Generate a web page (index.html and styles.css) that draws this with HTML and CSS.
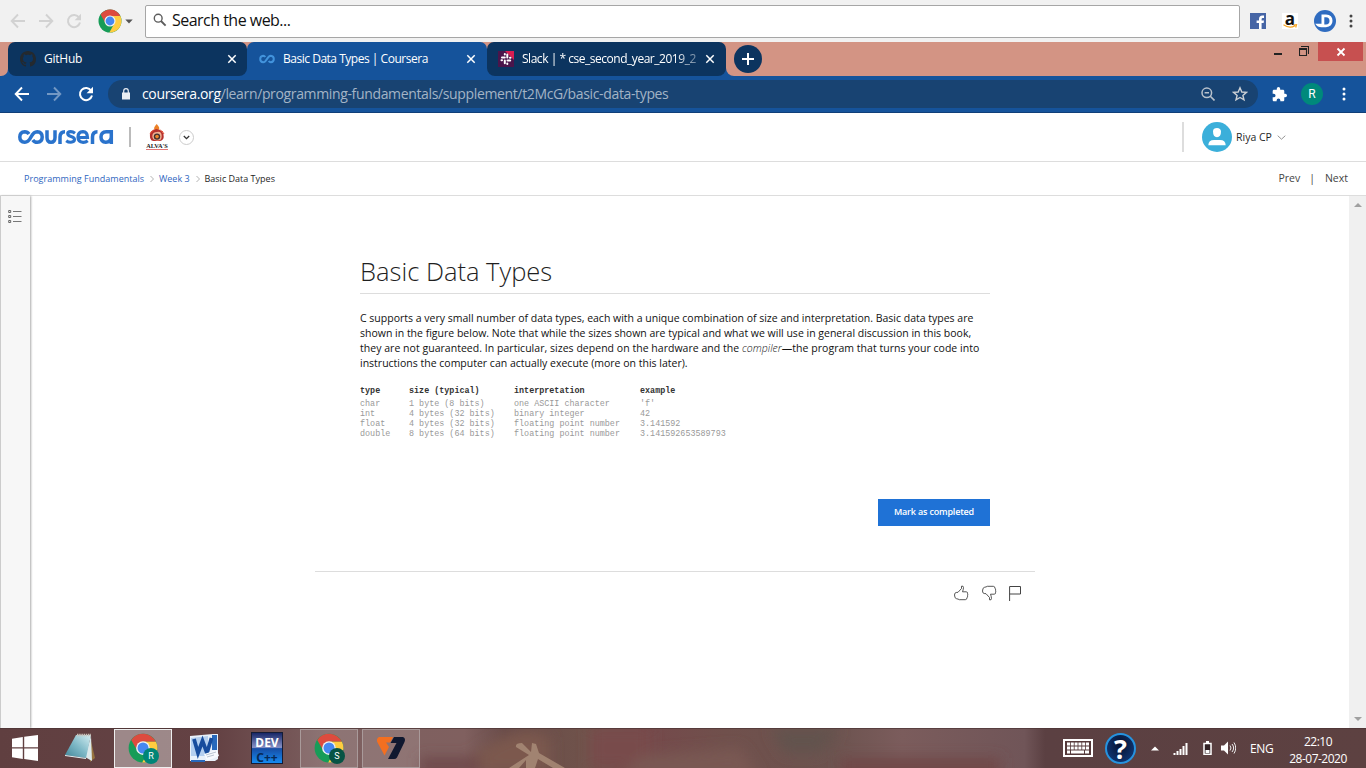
FILE: index.html
```html
<!DOCTYPE html>
<html lang="en">
<head>
<meta charset="utf-8">
<title>Basic Data Types | Coursera</title>
<link rel="stylesheet" href="styles.css">
</head>
<body>
<svg class="defs" width="0" height="0">
  <symbol id="back" viewBox="0 0 16 16"><path d="M15 8H2M8 1.5L1.7 8 8 14.5" fill="none" stroke="currentColor" stroke-width="1.9"/></symbol>
  <symbol id="forward" viewBox="0 0 16 16"><path d="M1 8h13M8 1.5L14.3 8 8 14.5" fill="none" stroke="currentColor" stroke-width="1.9"/></symbol>
  <symbol id="reload" viewBox="0 0 16 16"><path d="M13.2 4.7A6.1 6.1 0 1 0 14 9.6" fill="none" stroke="currentColor" stroke-width="2"/><path d="M15 .8v6.4H8.6z" fill="currentColor"/></symbol>
  <symbol id="chrome" viewBox="0 0 48 48"><circle cx="24" cy="24" r="23" fill="#179c58"/><path d="M24 14h20.7A23 23 0 0 0 5.2 11L15.3 29A10 10 0 0 1 24 14Z" fill="#dd4b3e"/><path d="M44.7 14A23 23 0 0 1 22.7 47L32.7 29A10 10 0 0 0 24 14Z" fill="#ffcd40"/><circle cx="24" cy="24" r="11" fill="#f4f4f4"/><circle cx="24" cy="24" r="8.8" fill="#4688f1"/></symbol>
  <symbol id="close" viewBox="0 0 10 10"><path d="M1.3 1.300l7.400 7.400M8.700 1.300L1.300 8.700" fill="none" stroke="currentColor" stroke-width="1.500"/></symbol>
  <symbol id="dots" viewBox="0 0 4 14"><circle cx="2" cy="2" r="1.5"/><circle cx="2" cy="7" r="1.5"/><circle cx="2" cy="12" r="1.5"/></symbol>
  <symbol id="chev" viewBox="0 0 8 8"><path d="M2.5 1l3 3-3 3" fill="none" stroke="#aaa" stroke-width=".9"/></symbol>
  <symbol id="thumb" viewBox="0 0 16 16"><path d="M1.500 10q0-2.300 1.700-2.500L5 7.300 8.500 3.500V1.200q2-.6 2 1.300Q10.300 5 9.500 6.800h3.700q1.800.2 1.400 2 .5 1.200-.1 2 .4 1.200-.5 2-.1 1.800-1.700 1.900H6.300q-1.200-.8-2.600-.9-2.200-.3-2.200-3.800z" fill="none" stroke="#444" stroke-width=".9"/></symbol>
</svg>

<header class="search-bar">
  <svg class="nav n1"><use href="#back"/></svg>
  <svg class="nav n2"><use href="#forward"/></svg>
  <svg class="nav n3"><use href="#reload"/></svg>
  <svg class="engine"><use href="#chrome"/></svg>
  <svg class="caret" viewBox="0 0 8 5"><path d="M.3.5h7.400L4 4.500z" fill="#555"/></svg>
  <div class="search-box">
    <svg class="lens" viewBox="0 0 14 14"><circle cx="5.2" cy="5.200" r="3.900" fill="none" stroke="#5c5c5c" stroke-width="1.400"/><path d="M8 8l4.600 4.600" stroke="#5c5c5c" stroke-width="1.900"/></svg>
    <span>Search the web...</span>
  </div>
  <svg class="fb" viewBox="0 0 16 16"><path d="M0 0h16v16H0z" fill="#4665a5"/><path d="M9 16v-6H6.600V7.500H9V6q0-3.500 3.500-3.500H14V5h-1.300q-1.100 0-1.100 1.200v1.300H14l-.4 2.500h-2v6z" fill="#fff"/></svg>
  <div class="amazon"><b>a</b><svg viewBox="0 0 16 5"><path d="M1.500.8Q7.500 5 13 1.700M11.500 1l3-.3-.8 2.800" fill="none" stroke="#f6a21c" stroke-width="1.200"/></svg></div>
  <svg class="dlogo" viewBox="0 0 22 22"><circle cx="11" cy="11" r="11" fill="#2f6cc0"/><path d="M7.500 4.500H12q6.500.4 6.500 6.300T12 17.300H7.500q-4 0-6.300-3.600h6.300zM10.300 7.300v7.200H12q3.500-.3 3.500-3.600T12 7.300z" fill="#fff" fill-rule="evenodd"/></svg>
  <svg class="dots grey"><use href="#dots"/></svg>
</header>

<nav class="tabs">
  <span class="gap-left"></span>
  <div class="tab">
    <svg class="github" viewBox="0 0 16 16"><path fill="#24292e" d="M8 0C3.580 0 0 3.580 0 8c0 3.540 2.290 6.530 5.470 7.590.4.070.550-.170.550-.380 0-.190-.010-.820-.010-1.490-2.010.370-2.530-.490-2.690-.940-.090-.230-.480-.940-.820-1.130-.280-.150-.680-.520-.010-.530.630-.010 1.080.580 1.230.820.720 1.210 1.870.870 2.330.660.070-.520.280-.870.510-1.070-1.780-.200-3.640-.890-3.640-3.950 0-.870.310-1.590.820-2.150-.080-.200-.360-1.020.080-2.120 0 0 .670-.210 2.200.820.640-.180 1.320-.270 2-.270s1.360.090 2 .270c1.530-1.040 2.200-.820 2.200-.820.440 1.100.160 1.920.080 2.120.510.560.820 1.270.820 2.150 0 3.070-1.870 3.750-3.650 3.950.290.250.540.730.540 1.480 0 1.070-.010 1.930-.010 2.200 0 .210.150.460.550.380A8.010 8.010 0 0 0 16 8c0-4.420-3.580-8-8-8z"/></svg>
    <span class="tab-title t1">GitHub</span>
    <svg class="x"><use href="#close"/></svg>
  </div>
  <div class="tab active">
    <svg class="infinity" viewBox="0 0 16 10"><path d="M6.300 3Q5.500 1.700 4.200 1.700 1.200 2 1.200 5t3 3.300Q6.200 8.200 8 5t3.800-3.300Q14.800 2 14.800 5t-3 3.300Q10.500 8.300 9.700 7" fill="none" stroke="#4293dc" stroke-width="2"/></svg>
    <span class="tab-title t2">Basic Data Types | Coursera</span>
    <svg class="x"><use href="#close"/></svg>
  </div>
  <div class="tab third">
    <svg class="slack" viewBox="0 0 16 16"><path d="M0 0h16v16H0z" fill="#4a154b"/><path d="M7 0h9v9z" fill="#d81e52"/><path d="M6.800 3v.5M4 6.500h2.800M9.300 3.500v3M12 6.700h.5M3.500 9.300H4M6.800 9.500v2.800M9.300 12.500v.5M9.500 9.500h2.700" stroke="#fff" stroke-width="2" stroke-linecap="round"/></svg>
    <span class="tab-title t3">Slack | * cse_second_year_2019_2</span>
    <svg class="x"><use href="#close"/></svg>
  </div>
  <div class="strip-end">
    <span class="plus"><svg viewBox="0 0 12 12"><path d="M6 0v12M0 6h12" stroke="#fff" stroke-width="2"/></svg></span>
    <div class="window-buttons">
      <i class="minimize"></i>
      <svg class="restore" viewBox="0 0 10 10"><path d="M.5 2.500h7v7h-7zM.5 3.500h7M2 .5h7.500v7.500" fill="none" stroke="#222" stroke-width="1.100"/></svg>
      <span class="shut"><svg viewBox="0 0 10 10"><path d="M1.500 1.500l7 7M8.500 1.500l-7 7" stroke="#fff" stroke-width="1.800"/></svg></span>
    </div>
  </div>
</nav>

<div class="address-row">
  <svg class="nav a1"><use href="#back"/></svg>
  <svg class="nav a2"><use href="#forward"/></svg>
  <svg class="nav a3"><use href="#reload"/></svg>
  <div class="omnibox">
    <svg class="lock" viewBox="0 0 8 12"><path d="M0 4.500h8v7H0z" fill="#e8edf3"/><path d="M1.700 5V3a2.300 2.300 0 0 1 4.600 0v2" fill="none" stroke="#e8edf3" stroke-width="1.200"/></svg>
    <span class="url"><b>coursera.org</b>/learn/programming-fundamentals/supplement/t2McG/basic-data-types</span>
    <svg class="zoomout" viewBox="0 0 14 14"><circle cx="5.800" cy="5.800" r="4.800" fill="none" stroke="#b9c2cc" stroke-width="1.500"/><path d="M9.300 9.300l4.200 4.200M3.600 5.800H8" stroke="#b9c2cc" stroke-width="1.600"/></svg>
    <svg class="star" viewBox="0 0 16 16"><path d="M8 1.800l1.800 4.200 4.600.4L10.900 9.400l1.100 4.500-4-2.400-4 2.400 1.100-4.500L1.600 6.400 6.200 6z" fill="none" stroke="#cbd0d5" stroke-width="1.400"/></svg>
  </div>
  <svg class="puzzle" viewBox="1 1 22 22"><path fill="#fff" d="M20.500 11H19V7c0-1.100-.9-2-2-2h-4V3.500a2.500 2.500 0 0 0-5 0V5H4c-1.100 0-2 .9-2 2v3.800h1.500a2.700 2.700 0 0 1 0 5.400H2V20c0 1.100.9 2 2 2h3.800v-1.500a2.700 2.700 0 0 1 5.400 0V22H17c1.100 0 2-.9 2-2v-4h1.500a2.500 2.500 0 0 0 0-5z"/></svg>
  <span class="profile">R</span>
  <svg class="dots white"><use href="#dots"/></svg>
</div>

<div class="site-header">
  <svg class="coursera" viewBox="0 0 96 18"><g fill="none" stroke="#2a73cc" stroke-width="3.500"><path d="M11 6Q9.500 3.700 6.800 3.700 1.800 4 1.800 9t5 5.300Q10.300 14.300 13 9T19.200 3.700Q24.200 4 24.200 9t-5 5.300Q16.300 14.300 14.800 12"/><path d="M29 2.200v7.300q0 4.800 4 4.800t4-4.800V2.200"/><path d="M42 16V9q0-5.300 5-5.300"/><path d="M57 5.200Q55 3.600 52.700 3.600q-3 0-3 2t3.300 2.800q3.500.8 3.500 3.200t-3.700 2.700q-2.600 0-4.600-1.600" stroke-width="3.100"/><path d="M60.500 9.500h9Q69.300 3.800 65 3.700q-5 .3-5 5.300t5.200 5.300q2.600 0 4.500-1.600" stroke-width="3.200"/><path d="M74.500 16V9q0-5.300 5-5.300"/><path d="M93.300 16V3.700h-5q-5.300.3-5.300 5.300t4.800 5.300q5-.3 5.500-5"/></g></svg>
  <i class="divider"></i>
  <div class="college">
    <svg viewBox="0 0 18 18"><path d="M8.700 0q4 4 1.800 6H6.800Q4.700 4 8.700 0" fill="#ed8126"/><path d="M8.500 5q-8 1-6.500 8.500 1 3.500 3.500 3.500h6.500q3.500-1 3.700-4Q16 6 8.500 5" fill="#b5302d"/><path d="M9 8Q4.500 8 4.300 12T9 16.500t4.700-4.500T9 8" fill="#efb092"/><circle cx="9" cy="12.600" r="3.200" fill="#413033"/><circle cx="9" cy="12.600" r="1.800" fill="#ee862c"/><path d="M4 7l-2 3M6 5.500L3.500 8M12 5.500L14.500 8M14 7l2 3" stroke="#e54c31"/></svg>
    <span>ALVA'S</span>
  </div>
  <span class="round"><svg viewBox="0 0 7 5"><path d="M.8 1l2.700 2.700L6.200 1" fill="none" stroke="#333" stroke-width="1.300"/></svg></span>
  <i class="divider light"></i>
  <svg class="avatar" viewBox="0 0 30 30"><circle cx="15" cy="15" r="15" fill="#3bafda"/><path d="M11 9.200Q11.200 6 15 6t4 3.500Q19 15 15 15.300 11 15 11 9.200M6.300 23.300Q6.500 18 12 18h6q5.500 0 5.700 5.300z" fill="#fff"/></svg>
  <span class="user">Riya CP</span>
  <svg class="user-caret" viewBox="0 0 9 5"><path d="M.7.7l3.800 3.500L8.300.7" fill="none" stroke="#888" stroke-width=".9"/></svg>
</div>

<div class="crumbs">
  <a class="c1">Programming Fundamentals</a><svg><use href="#chev"/></svg><a class="c2">Week 3</a><svg><use href="#chev"/></svg><span class="c3">Basic Data Types</span>
  <span class="prev">Prev</span><span class="bar">|</span><span class="next">Next</span>
</div>

<div class="content">
  <aside><svg viewBox="0 0 14 13"><path d="M5 1.500h8.500M5 6.500h8.500M5 11.500h8.500" stroke="#777"/><path d="M.7.500h2v2h-2zM.7 5.500h2v2h-2zM.7 10.500h2v2h-2z" fill="none" stroke="#666"/></svg></aside>
  <main>
    <article>
      <h1><span>Basic Data Types</span></h1>
      <p><span>C supports a very small number of data types, each with a unique combination of size and interpretation. Basic data types are</span><br><span>shown in the figure below. Note that while the sizes shown are typical and what we will use in general discussion in this book,</span><br><span class="l3">they are not guaranteed. In particular, sizes depend on the hardware and the <em>compiler</em>—the program that turns your code into</span><br><span>instructions the computer can actually execute (more on this later).</span></p>
      <div class="types">
        <b>type</b><b>size (typical)</b><b>interpretation</b><b>example</b>
        <span>char</span><span>1 byte (8 bits)</span><span>one ASCII character</span><span>'f'</span>
        <span>int</span><span>4 bytes (32 bits)</span><span>binary integer</span><span>42</span>
        <span>float</span><span>4 bytes (32 bits)</span><span>floating point number</span><span>3.141592</span>
        <span>double</span><span>8 bytes (64 bits)</span><span>floating point number</span><span>3.141592653589793</span>
      </div>
      <button>Mark as completed</button>
    </article>
    <footer>
      <svg viewBox="0 0 16 16"><use href="#thumb"/></svg>
      <svg class="down" viewBox="0 0 16 16"><use href="#thumb"/></svg>
      <svg class="flag" viewBox="0 0 12 16"><path d="M.6 16V1.500h10.900v7.500H.6" fill="none" stroke="#444"/></svg>
    </footer>
  </main>
  <div class="scrollbar"><svg viewBox="0 0 8 4"><path d="M0 4l4-4 4 4z" fill="#a0a0a0"/></svg><svg viewBox="0 0 8 4"><path d="M0 0l4 4 4-4z" fill="#a0a0a0"/></svg></div>
</div>

<div class="taskbar">
  <svg class="wallpaper" viewBox="0 0 1366 40" preserveAspectRatio="none">
    <defs><linearGradient id="wall"><stop offset="0" stop-color="#603f40"/><stop offset=".16" stop-color="#644244"/><stop offset=".24" stop-color="#7d6060"/><stop offset=".34" stop-color="#80605f"/><stop offset=".37" stop-color="#684b49"/><stop offset=".43" stop-color="#70534b"/><stop offset=".47" stop-color="#75494b"/><stop offset=".53" stop-color="#70504c"/><stop offset=".61" stop-color="#6c534f"/><stop offset=".66" stop-color="#7b5c5c"/><stop offset=".75" stop-color="#705558"/><stop offset=".765" stop-color="#5b4042"/><stop offset="1" stop-color="#5d4141"/></linearGradient><filter id="soft"><feGaussianBlur stdDeviation="7"/></filter><filter id="slight"><feGaussianBlur stdDeviation=".7"/></filter></defs>
    <path d="M0 0h1366v40H0z" fill="url(#wall)"/>
    <g filter="url(#soft)"><path d="M470 30q50-40 80-20v35h-90z" fill="#7b584e"/><path d="M590 0h60v40h-60z" fill="#784b4b"/><path d="M770 0h70l-20 25h-35z" fill="#62534d"/><path d="M640 28l100-8 20 30H620z" fill="#795852"/><path d="M840 30h160v20H840z" fill="#704746"/><path d="M420 30h60v15h-60z" fill="#6d4648"/></g>
    <path d="M509 40l20-13-13-8q-1-4 6-4l9 9 1-9 4 1 3 9 26 15h-12l-15-9-3 9h-9v-8l-7 8z" fill="#a68875" opacity=".9" filter="url(#slight)"/>
    <path d="M0 .5h1366" stroke="#4c3435" opacity=".7"/>
  </svg>
  <div class="apps">
    <svg class="win" viewBox="0 0 26 26"><path d="M0 3.700L10.800 2v10.300H0zM12.200 1.800L26 0v12.300H12.200zM0 13.500h10.800v10.400L0 22.300zM12.200 13.500H26V26l-13.800-1.900z" fill="#fff"/></svg>
    <svg class="note" viewBox="0 0 32 30"><defs><linearGradient id="pad" x1="1" x2="0" y2="1"><stop stop-color="#d5eef2"/><stop offset=".5" stop-color="#7fb9c7"/><stop offset="1" stop-color="#3f8598"/></linearGradient></defs><path d="M25 4l5 21-5 4z" fill="#96733f"/><path d="M26 3l1 25-7-4z" fill="#dbe8ea"/><path d="M11 2h15l-5 23L0 22z" fill="url(#pad)"/><path d="M0 22l21 3v1L0 23z" fill="#e5f2f5"/><path d="M12 2h14" stroke="#c7c2bb" stroke-width="2.500" stroke-dasharray="1.500 .7"/></svg>
    <div class="app running current"><svg class="chrome"><use href="#chrome"/></svg><span class="badge">R</span></div>
    <svg class="word" viewBox="0 0 29 29"><path d="M0 2L23 0h5v25l-3 2H0z" fill="#e9f1fa"/><path d="M1 4l17-2v20H1z" fill="#b4cfef"/><path d="M22 1h5v15h-5z" fill="#2869bc"/><path d="M4 5l4 14 4.500-12L17 19l4.500-15" fill="none" stroke="#174c9d" stroke-width="3.800"/><path d="M14 20l13-4 2 6-12 5z" fill="#f8fbff"/><path d="M16 21l10-3M17 23l7-2" stroke="#b9c4d1"/><path d="M1 27h14" stroke="#2869bc" stroke-width="2"/></svg>
    <div class="dev"><b>DEV</b><b class="cpp">C++</b></div>
    <div class="app running"><svg class="chrome"><use href="#chrome"/></svg><span class="badge dark">S</span></div>
    <div class="app running"><svg class="v7" viewBox="0 0 28 22"><path d="M2 0h14l-3 5.500H9l3 4.500-4.500 8.500L0 4.500Q-.5 1 2 0" fill="#f36f21"/><path d="M17 0h9q3 1 1.500 5L20 20.500q-1 1.500-3 1.500h-6l8.500-16h-6z" fill="#10182f"/></svg></div>
  </div>
  <div class="tray">
    <svg class="keyboard" viewBox="0 0 30 18"><path d="M1 1h28v16H1z" fill="#55393a" stroke="#fff" stroke-width="2"/><path d="M4 5h22M4 9h22" stroke="#fff" stroke-width="3" stroke-dasharray="3 .8"/><path d="M4 13h3M8 13h13M22 13h4" stroke="#fff" stroke-width="3"/></svg>
    <span class="help">?</span>
    <svg class="up" viewBox="0 0 8 5"><path d="M0 4.500L4 .5l4 4z" fill="#fff"/></svg>
    <svg class="signal" viewBox="0 0 15 13"><path d="M1.500 13v-2M4.500 13v-4M7.500 13V7M10.500 13V4M13.500 13V1" stroke="#fff" stroke-width="2"/></svg>
    <svg class="battery" viewBox="0 0 9 14"><path d="M1 2.500h7v10.800H1z" fill="#312124" stroke="#fff" stroke-width="1.500"/><path d="M3 0h3v2H3zM2.500 9h4v3h-4z" fill="#fff"/></svg>
    <svg class="volume" viewBox="0 0 15 14"><path d="M0 4.500h3L7 .5v13l-4-4H0z" fill="#fff"/><path d="M9 4.500q2 2.500 0 5M11 3q3.300 4 0 8M13 1.500q3.500 5.500 0 11" fill="none" stroke="#eee" stroke-width="1"/></svg>
    <span class="lang">ENG</span>
    <div class="clock"><span class="time">22:10</span><span class="date">28-07-2020</span></div>
  </div>
</div>
</body>
</html>
```
FILE: styles.css
```css
* { box-sizing: border-box; }
body { margin: 0; width: 1366px; height: 768px; overflow: hidden; background: #fff; font-family: "Open Sans", sans-serif; color: #1f1f1f; }
svg { display: block; flex: none; }
span, a, i { flex: none; white-space: nowrap; }
.defs { position: absolute; }
.nav { width: 16px; height: 16px; }

.search-bar { height: 42px; background: #f1f1f1; display: flex; align-items: center; color: #d2d2d2; }
.n1 { margin-left: 10px; }
.n2 { margin-left: 12px; }
.n3 { margin-left: 12px; }
.engine { width: 24px; height: 24px; margin-left: 16px; }
.caret { width: 8px; height: 5px; margin-left: 3px; }
.search-box { width: 1095px; height: 33px; margin-left: 12px; background: #fff; border: 1px solid #a6a6a6; border-radius: 2px; display: flex; align-items: center; font-size: 16px; color: #111; letter-spacing: -.52px; padding: 0 0 2px 7px; }
.lens { width: 14px; height: 14px; margin-right: 5px; }
.fb { width: 16px; height: 16px; margin-left: 10px; }
.amazon { width: 16px; height: 16px; margin-left: 16px; background: #fff; display: flex; flex-direction: column; align-items: center; font-size: 17px; line-height: 11px; color: #111; }
.amazon svg { width: 16px; height: 5px; }
.dlogo { width: 22px; height: 22px; margin-left: 16px; }
.dots { width: 4px; height: 14px; }
.grey { fill: #444; margin-left: 13px; }

.tabs { height: 34px; display: flex; background: linear-gradient(#d39484 50%, #15539b 50%); }
.gap-left { width: 8px; background: #d39484; border-radius: 0 0 7px 0; }
.tab { width: 239px; border-radius: 7px 7px 8px 8px; background: #0c345f; display: flex; align-items: center; color: #fff; font-size: 12px; padding: 0 10px 0 12px; }
.tab.active { width: 240px; background: #15539b; border-radius: 7px 7px 0 0; padding-right: 11px; }
.tab.third { padding-left: 11px; padding-right: 11px; }
.tab .x { width: 10px; height: 10px; margin-left: auto; }
.github, .infinity, .slack { width: 16px; height: 16px; margin-right: 8px; }
.infinity { height: 10px; }
.tab-title { padding-bottom: 1px; }
.t1 { letter-spacing: -.25px; }
.t2 { letter-spacing: -.48px; }
.t3 { letter-spacing: -.47px; -webkit-mask-image: linear-gradient(90deg, #000 88%, #0006); mask-image: linear-gradient(90deg, #000 88%, #0006); }
.strip-end { flex: 1; background: #d39484; border-radius: 0 0 0 8px; display: flex; align-items: flex-start; justify-content: space-between; padding-left: 8px; }
.plus { width: 28px; height: 28px; margin-top: 3px; border-radius: 50%; background: #0c345f; display: grid; place-items: center; }
.plus svg { width: 12px; height: 12px; }
.window-buttons { display: flex; align-items: flex-start; margin-right: 3px; }
.minimize { width: 8px; height: 2px; background: #222; margin-top: 11px; }
.restore { width: 10px; height: 10px; margin: 4px 9px 0 17px; }
.shut { width: 45px; height: 19px; background: #c75050; display: grid; place-items: center; }
.shut svg { width: 10px; height: 10px; }

.address-row { height: 37px; background: #15539b; border-bottom: 1px solid #103f78; display: flex; align-items: center; color: #fff; }
.a1 { margin-left: 14px; }
.a2 { margin-left: 16px; color: #7398c4; }
.a3 { margin-left: 16px; }
.omnibox { width: 1150px; height: 28px; margin-left: 14px; border-radius: 14px; background: #184372; display: flex; align-items: center; padding-left: 14px; }
.lock { width: 8px; height: 12px; margin-right: 12px; }
.url { color: #a3b4c6; font-size: 14px; letter-spacing: -.355px; padding-bottom: 1px; }
.url b { color: #fff; font-weight: 400; }
.zoomout { width: 14px; height: 14px; margin-left: auto; }
.star { width: 16px; height: 16px; margin: 0 10px 0 17px; }
.puzzle { width: 15px; height: 15px; margin-left: 14px; }
.profile { width: 22px; height: 22px; border-radius: 50%; background: #00897b; color: #fff; font: 12px/22px Roboto, sans-serif; text-align: center; margin-left: 14px; }
.white { fill: #fff; margin-left: 19px; }

.site-header { height: 49px; border-bottom: 1px solid #ddd; display: flex; align-items: center; }
.coursera { width: 96px; height: 18px; margin-left: 18px; }
.divider { width: 2px; height: 20px; background: #bbb; margin-left: 15px; }
.college { width: 22px; margin-left: 15px; display: flex; flex-direction: column; align-items: center; }
.college svg { width: 18px; height: 18px; }
.college span { font: bold 6.3px/7px "Liberation Serif", serif; color: #222; border-bottom: 1px solid #e27777; }
.round { width: 15px; height: 15px; border: 1px solid #ccc; border-radius: 50%; display: grid; place-items: center; margin-left: 11px; }
.round svg { width: 7px; height: 5px; }
.divider.light { height: 30px; background: #ddd; margin-left: auto; }
.avatar { width: 30px; height: 30px; margin-left: 18px; }
.user { width: 37px; font-size: 10.5px; margin-left: 4px; }
.user-caret { width: 9px; height: 5px; margin: 1px 80px 0 4px; }

.crumbs { height: 34px; border-bottom: 1px solid #ddd; display: flex; align-items: center; padding-left: 24px; font-size: 9px; }
.crumbs a { color: #2f66c0; }
.crumbs svg { width: 8px; height: 8px; }
.c1 { width: 124px; letter-spacing: .02px; }
.c2 { width: 35px; margin-left: 3px; }
.c3 { margin-left: 2.5px; }
.prev, .bar, .next { font-size: 10.5px; color: #444; padding-bottom: 1px; }
.prev { margin-left: auto; }
.bar { margin: 0 10px 0 9px; }
.next { margin-right: 18px; }

.content { height: 532px; display: flex; }
aside { width: 30px; background: #f7f7f7; border-left: 1px solid #ccc; box-shadow: 1px 0 2px #aaa; padding: 14px 0 0 6.5px; }
aside svg { width: 14px; height: 13px; }
main { flex: 1; padding: 57px 0 0 285px; }
article { width: 630px; margin-left: 45px; display: flex; flex-direction: column; }
h1 { margin: 0; height: 41px; border-bottom: 1px solid #ddd; font-size: 25.5px; line-height: 37px; font-weight: 300; }
p { margin: 17px 0 15px; font-size: 10.5px; line-height: 15px; color: #111; white-space: nowrap; }
.l3 { letter-spacing: .031px; }
em { font-weight: 300; }
.types { display: grid; grid-template-columns: 49px 105px 126px 90px; grid-template-rows: 13px repeat(4, 10px); font: 8.42px/11px "Liberation Mono", monospace; color: #999; white-space: pre; }
.types b { color: #333; }
button { align-self: flex-end; width: 112px; height: 27px; margin-top: 60px; padding: 0 0 2px; border: 0; background: #1f72d6; color: #fff; font: 600 9px "Open Sans", sans-serif; letter-spacing: -.17px; }
footer { width: 720px; margin-top: 45px; border-top: 1px solid #ddd; display: flex; justify-content: flex-end; padding: 13px 14px 0 0; }
footer svg { width: 16px; height: 16px; margin-left: 12px; }
footer .down { transform: scaleY(-1); }
footer .flag { width: 12px; }
.scrollbar { width: 17px; background: #f0f0f0; display: flex; flex-direction: column; justify-content: space-between; align-items: center; padding: 7px 0; }
.scrollbar svg { width: 8px; height: 4px; }

.taskbar { position: relative; height: 40px; display: flex; justify-content: space-between; color: #fff; }
.wallpaper { position: absolute; inset: 0; width: 1366px; height: 40px; }
.apps, .tray { position: relative; display: flex; align-items: center; }
.win { width: 26px; height: 26px; margin-left: 12px; }
.note { width: 32px; height: 30px; margin: 0 17px 0 27px; }
.app { position: relative; width: 58px; height: 39px; border: 1px solid #a99a9a; background: #ffffff20; display: grid; place-items: center; }
.app.current { background: #ffffff60; border-color: #eee; }
.chrome { width: 30px; height: 30px; }
.badge { position: absolute; right: 12px; bottom: 3px; width: 16px; height: 16px; border-radius: 50%; background: #008577; font: 9px/16px Roboto, sans-serif; text-align: center; }
.badge.dark { background: #075344; }
.word { width: 29px; height: 29px; margin: 0 32px 0 18px; }
.dev { width: 32px; height: 32px; border: 1px solid #151c35; background: linear-gradient(#172767, #8791c6 48%, #174da4 52%, #158bf2); display: flex; flex-direction: column; align-items: center; font-size: 13px; line-height: 10px; gap: 5px; padding-top: 5px; margin-right: 17px; }
.dev b { height: 10px; font-family: "Noto Sans", sans-serif; font-size: 12px; }
.dev .cpp { color: #062956; }
.app + .app { margin-left: 4px; }
.v7 { width: 28px; height: 22px; }
.keyboard { width: 30px; height: 18px; }
.help { width: 31px; height: 31px; margin-left: 12px; border-radius: 50%; border: 2px solid #2693df; background: radial-gradient(at 50% 35%, #07112e, #123f83); text-align: center; font: bold 27px/28px "Open Sans", sans-serif; }
.up { width: 8px; height: 5px; margin-left: 15px; }
.signal { width: 15px; height: 13px; margin-left: 14px; }
.battery { width: 9px; height: 14px; margin-left: 15px; }
.volume { width: 15px; height: 14px; margin-left: 9px; }
.lang { width: 24px; margin-left: 14px; font-size: 12px; letter-spacing: -.4px; }
.clock { width: 60px; margin: 0 18px 0 14px; display: flex; flex-direction: column; align-items: center; font-size: 12px; line-height: 17px; padding-top: 3px; letter-spacing: -.5px; }
```
